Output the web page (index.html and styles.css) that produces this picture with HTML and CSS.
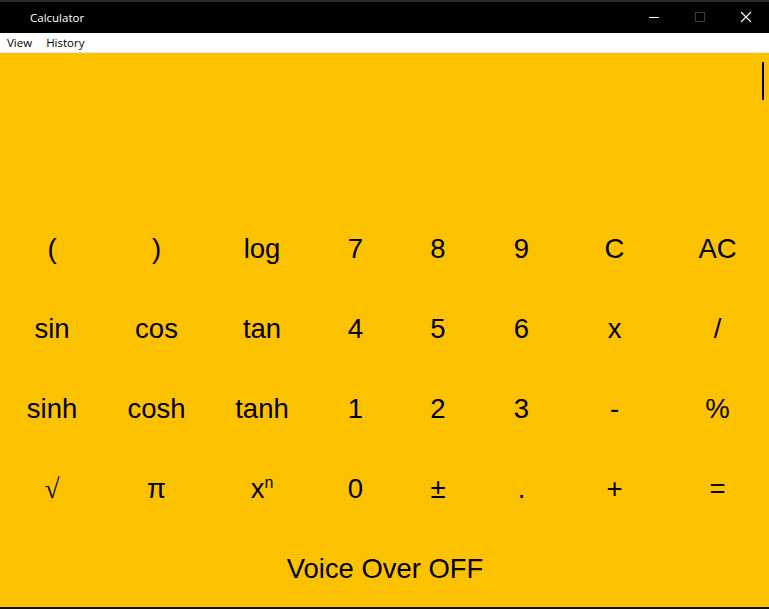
FILE: index.html
```html
<!DOCTYPE html>
<html>
<head>
<meta charset="utf-8">
<link rel="stylesheet" href="styles.css">
</head>
<body>
<div class="window">
  <div class="topstrip"></div>
  <div class="titlebar">
    <span class="title">Calculator</span>
    <div class="controls">
      <span class="ctl"><svg width="12" height="12" viewBox="0 0 12 12"><path d="M1 6.5h10" stroke="#fff" stroke-width="1"/></svg></span>
      <span class="ctl"><svg width="12" height="12" viewBox="0 0 12 12"><rect x="1.5" y="1.5" width="9" height="9" fill="none" stroke="#3c3c3c" stroke-width="1"/></svg></span>
      <span class="ctl"><svg width="12" height="12" viewBox="0 0 12 12"><path d="M1 1L11 11M11 1L1 11" stroke="#fff" stroke-width="1.1"/></svg></span>
    </div>
  </div>
  <div class="menubar">
    <span class="menu">View</span>
    <span class="menu">History</span>
  </div>
  <div class="calc">
    <div class="display"><span class="cursor"></span></div>
    <div class="keys">
      <div class="key">(</div><div class="key">)</div><div class="key">log</div><div class="key">7</div><div class="key">8</div><div class="key">9</div><div class="key">C</div><div class="key">AC</div>
      <div class="key">sin</div><div class="key">cos</div><div class="key">tan</div><div class="key">4</div><div class="key">5</div><div class="key">6</div><div class="key">x</div><div class="key">/</div>
      <div class="key">sinh</div><div class="key">cosh</div><div class="key">tanh</div><div class="key">1</div><div class="key">2</div><div class="key">3</div><div class="key">-</div><div class="key">%</div>
      <div class="key sym">√</div><div class="key">π</div><div class="key">x<sup class="sup">n</sup></div><div class="key">0</div><div class="key">±</div><div class="key">.</div><div class="key">+</div><div class="key">=</div>
    </div>
    <div class="voice">Voice Over OFF</div>
  </div>
  <div class="bottomline"></div>
</div>
</body>
</html>
```
FILE: styles.css
```css
html, body {
  margin: 0;
  padding: 0;
  background: #fcc200;
}
.window {
  width: 769px;
  height: 609px;
  display: flex;
  flex-direction: column;
  overflow: hidden;
}
.topstrip {
  height: 2px;
  background: #2b2b2b;
}
.titlebar {
  height: 31px;
  background: #000;
  display: flex;
  align-items: center;
  justify-content: space-between;
}
.title {
  color: #fff;
  font-family: "Open Sans", "Noto Sans", sans-serif;
  font-size: 11.5px;
  margin-left: 30px;
  margin-top: -1px;
}
.controls {
  display: flex;
  height: 100%;
}
.ctl {
  width: 46px;
  display: flex;
  align-items: center;
  justify-content: center;
  margin-top: -1px;
}
.menubar {
  height: 19px;
  background: #fff;
  border-bottom: 1px solid #e6e6e6;
  display: flex;
  align-items: center;
  gap: 14px;
  padding-left: 7px;
  font-family: "Open Sans", "Noto Sans", sans-serif;
  font-size: 11.5px;
  color: #000;
}
.calc {
  flex: 1;
  background: #fcc200;
  display: flex;
  flex-direction: column;
  font-family: "Liberation Sans", Arial, sans-serif;
  color: #000;
}
.display {
  height: 156px;
  display: flex;
  justify-content: flex-end;
  align-items: flex-start;
}
.cursor {
  width: 2px;
  height: 38px;
  background: #000;
  margin-top: 9px;
  margin-right: 5px;
}
.keys {
  display: grid;
  grid-template-columns: 104px 105px 106px 81px 84px 83px 103px 103px;
  grid-auto-rows: 80px;
}
.key {
  display: flex;
  align-items: center;
  justify-content: center;
  font-size: 27.5px;
}
.sym {
  font-family: "Liberation Serif", serif;
}
.sup {
  font-size: 16px;
  vertical-align: 0;
  position: relative;
  top: -6px;
  line-height: 0;
}
.voice {
  height: 78px;
  display: flex;
  align-items: center;
  justify-content: center;
  font-size: 27.4px;
  padding-left: 1px;
  padding-top: 1px;
  box-sizing: border-box;
}
.bottomline {
  height: 2px;
  background: #111;
}
```
